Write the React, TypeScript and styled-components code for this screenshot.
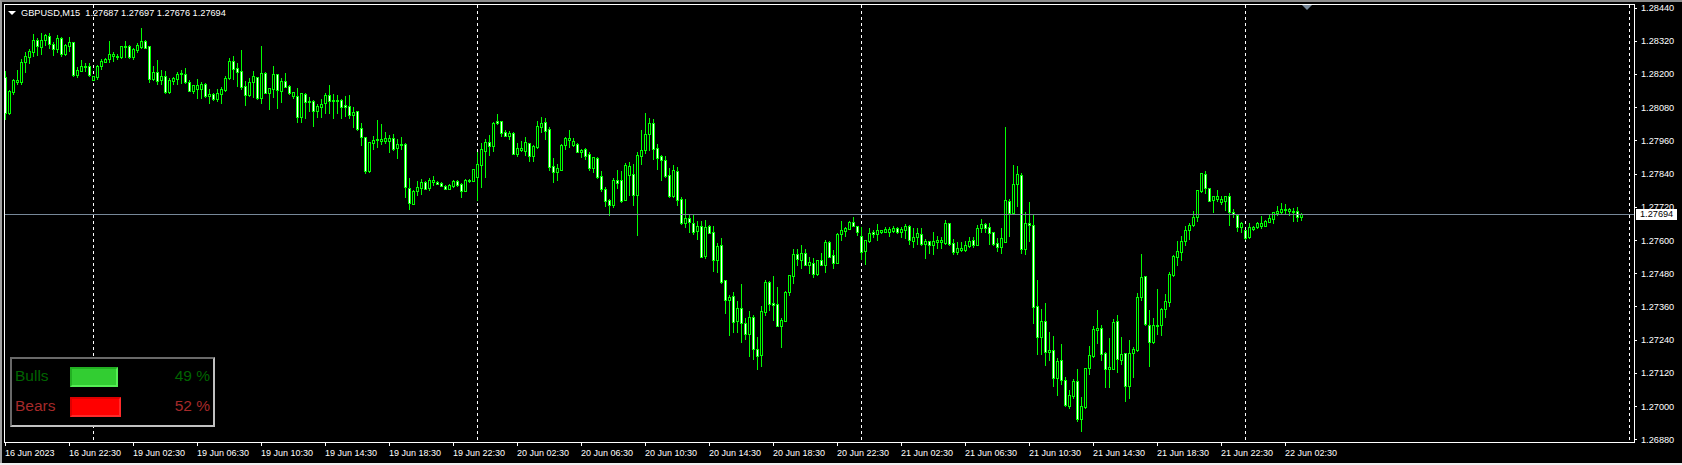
import React from "react";
import styled, { createGlobalStyle } from "styled-components";

type Bar = [number, number, number, number, number?];

// readings are [high, top, bottom, low, white body]; y in 1/3 px from a section base
const section1: Bar[] = [
  [153,170,280,296,1],[210,214,280,282],[178,181,215,223],[150,181,186,192],[118,127,186,191],[97,109,125,155],[87,94,110,130],[42,61,95,108],
  [55,61,78,105,1],[40,59,80,102],[42,46,60,75],[40,49,72,84,1],[67,71,87,105,1],[45,55,87,95],[52,55,102,107,1],[72,76,102,105],
  [52,67,78,92],[65,67,165,167,1],[142,151,165,170],[120,139,153,153],[128,139,141,153],[130,139,164,168,1],[168,169,179,179],[135,137,171,178],
  [116,124,137,147],[115,118,125,125],[64,103,117,125],[95,103,109,122],[103,109,112,118],[78,79,111,114],[64,78,80,110],[74,79,112,114,1],
  [84,87,111,117],[70,76,90,96],[24,64,81,84],[60,64,83,85,1],[78,79,177,186,1],[138,157,177,180],[120,157,182,192,1],[150,169,180,192],
  [152,169,215,218,1],[173,180,215,219],[170,175,183,192],[155,161,178,193],[150,160,163,190],[144,163,186,189,1],[180,187,212,214,1],[195,196,213,218],
  [178,196,208,234],[185,193,208,234],[190,192,227,232,1],[208,221,228,248],[220,223,238,240,1],[208,219,237,243],[200,208,221,248],[168,175,209,212],
  [115,124,174,178],[108,124,146,177,1],[130,145,155,198,1],[90,154,200,207,1],[183,199,224,254,1],[175,187,225,228],[153,169,185,232],[170,172,234,237,1],
  [78,160,233,248],[155,160,218,220,1],[205,205,220,267],[138,163,206,232],[162,163,211,263,1],[175,184,212,245],[160,184,200,202,1],[195,199,218,222,1],
  [215,217,227,235],[205,229,290,305,1],[219,220,290,305],[220,223,245,295,1],[230,243,245,273],[240,244,272,317,1],[252,259,272,290],[238,253,260,290],
  [220,226,250,280],[195,226,242,278,1],[222,240,242,293],[225,240,242,278],[238,241,260,295,1],[228,256,260,288,1],[225,259,284,295,1],[262,275,284,320],
  [272,274,326,330,1],[310,325,352,374,1],[350,352,453,458,1],[365,367,453,456],[348,359,368,388],[300,358,361,380],[312,358,362,372],[337,355,363,370],
  [345,355,362,395],[342,355,386,390,1],[358,373,385,415],[352,372,374,388],[370,373,502,530,1],[475,503,550,568,1],[510,514,552,553],[483,502,512,525],
];

const section2: Bar[] = [
  [238,247,263,282],[244,247,266,267,1],[235,241,263,270],[228,241,245,255],[244,246,251,252,1],[247,250,258,259,1],[254,257,266,267,1],[252,254,266,267],
  [240,244,258,260],[240,244,254,258,1],[250,253,272,291,1],[238,241,272,273],[238,240,244,245,1],[207,208,242,243],[155,193,230,300],[130,146,194,262],
  [118,127,152,230],[106,127,137,165,1],[65,70,137,152],[42,64,69,72,1],[63,64,98,108,1],[90,97,107,108,1],[92,100,107,117],[96,100,161,162,1],
  [130,145,161,168],[123,145,149,152],[112,127,152,165],[129,130,167,183,1],[136,139,167,183],[64,79,140,145],[52,70,80,95],[55,67,93,117,1],
  [80,88,200,210,1],[175,199,215,245,1],[193,205,215,240],[133,136,209,210],[112,115,136,147],[90,115,121,140],[113,124,134,138],[130,133,155,157,1],
  [148,150,155,172],[145,148,167,178,1],[157,163,203,210,1],[170,172,203,215],[172,175,231,235,1],[212,229,266,272,1],[262,268,302,318,1],[296,301,315,345,1],
  [235,241,315,322],[210,241,248,264,1],[213,241,302,305,1],[190,196,299,300],[186,199,226,285],[192,223,285,315,1],[155,166,285,405],[90,151,167,192],
  [40,103,149,158],[55,70,103,150],[57,70,146,177,1],[132,145,173,207,1],[165,169,179,240,1],[168,179,227,230,1],[203,226,288,291,1],[195,211,288,290],
  [202,214,299,315,1],[292,298,369,372,1],[298,355,369,381],[345,355,366,396,1],[345,370,396,402,1],[362,379,393,417],[363,379,470,472,1],[360,382,468,474],
  [375,379,399,400,1],[378,397,479,513,1],[430,439,479,515],[415,436,546,549,1],[540,541,599,640,1],[585,592,599,705],[576,589,665,696,1],[603,625,663,695],
  [552,625,668,725,1],[655,670,701,718,1],[633,652,701,767],[645,652,748,777,1],[711,748,767,807,1],[618,634,764,798],[540,546,635,645],[543,546,611,630,1],
  [528,610,615,660,1],[560,613,677,678,1],[655,661,677,740],[574,576,662,663],[525,526,577,584],[447,463,527,548],[447,463,478,495,1],[435,458,479,505],
  [447,458,494,495,1],[470,485,494,520],[474,488,521,530,1],[480,481,521,524],[460,481,494,495,1],[420,427,494,515],[422,427,470,470,1],[450,466,488,503,1],
  [400,401,488,488],
];

const section3: Bar[] = [
  [333,361,371,390],[350,355,362,378],[332,337,356,356],[321,337,347,347,1],[349,349,365,375,1],[350,377,425,447,1],[390,391,422,462],[354,370,393,396],
  [360,367,371,382,1],[342,361,371,390],[360,361,365,369],[350,358,365,366],[350,358,365,378],[348,355,363,366],[350,355,366,370,1],[352,358,365,382],
  [342,349,359,385],[345,349,391,402,1],[355,380,392,411],[354,370,380,403],[354,371,402,404,1],[388,394,402,444],[392,394,404,430,1],[366,394,404,432],
  [378,390,396,414],[380,390,396,414],[331,340,398,401],[339,340,402,404,1],[388,400,425,432,1],[396,415,425,431],[395,415,419,424],[393,405,419,424],
  [380,394,408,410],[381,391,405,410,1],[346,355,404,405],[327,343,353,365],[339,343,353,365,1],[340,352,368,402,1],[365,367,402,405,1],[384,400,411,423,1],
  [354,385,410,429],[51,271,395,397],[267,274,308,378,1],[165,223,308,310],[168,193,223,288],[190,196,418,428,1],[306,340,416,432],[277,340,346,393,1],
  [314,346,592,640,1],[510,589,680,732,1],[597,634,680,733],[579,634,727,766,1],[666,720,725,750],[678,721,803,828,1],[744,754,803,855],[702,751,809,822,1],
  [800,811,885,888,1],[840,856,887,893],[807,814,857,864],[777,814,927,933,1],[860,888,927,963],[775,775,891,894],[708,736,773,792],[648,658,737,740],
  [600,655,660,700],[645,655,731,750,1],[726,730,776,830,1],[685,772,776,830],[628,637,776,778],[615,634,746,785,1],[682,733,749,762],[730,730,827,873,1],
  [690,730,827,864],[710,718,730,800],[549,562,719,722],[432,502,560,570],[499,499,643,645,1],[600,646,697,768,1],[625,646,697,698],[537,646,648,672],
  [595,596,646,675],[553,574,596,620],[487,493,575,588],[435,439,494,497],[393,424,440,465],[378,394,425,450],[348,361,394,405],[340,346,361,387],
  [304,322,346,347],[240,241,320,332],[190,190,242,245],[183,193,235,248,1],[234,235,272,274,1],[259,259,270,305],[240,259,268,272],[258,268,275,282],
  [259,259,274,300],[250,259,307,345,1],[297,307,313,322,1],[315,316,350,362,1],
];

const section4: Bar[] = [
  [157,160,172,187],[179,181,204,208,1],[160,172,200,203],[168,171,177,180],[155,159,171,174],[138,160,167,175],[150,153,167,168],[135,145,155,157],
  [125,127,147,160],[108,124,130,135],[100,118,126,133],[102,117,119,130],[113,117,123,135],[115,123,125,153],[112,124,140,152,1],[128,132,141,150],
];

const toPixels = (base: number, bars: Bar[]): Bar[] =>
  bars.map(([h, t, b, l, w]) => [
    Math.round(base + h / 3),
    Math.round(base + t / 3),
    Math.round(base + b / 3),
    Math.round(base + l / 3),
    w,
  ]);

const candles: Bar[] = [
  ...toPixels(20, section1),
  ...toPixels(100, section2),
  ...toPixels(110, section3),
  ...toPixels(170, section4),
];

const prices = [
  "1.28440", "1.28320", "1.28200", "1.28080", "1.27960", "1.27840", "1.27720",
  "1.27600", "1.27480", "1.27360", "1.27240", "1.27120", "1.27000", "1.26880",
];

const times = [
  "16 Jun 2023", "16 Jun 22:30", "19 Jun 02:30", "19 Jun 06:30", "19 Jun 10:30", "19 Jun 14:30", "19 Jun 18:30",
  "19 Jun 22:30", "20 Jun 02:30", "20 Jun 06:30", "20 Jun 10:30", "20 Jun 14:30", "20 Jun 18:30", "20 Jun 22:30",
  "21 Jun 02:30", "21 Jun 06:30", "21 Jun 10:30", "21 Jun 14:30", "21 Jun 18:30", "21 Jun 22:30", "22 Jun 02:30",
];

const separators = [93, 477, 861, 1245, 1629];

const Global = createGlobalStyle`
  html, body {
    margin: 0;
    background: #f0f0f0;
  }
`;

const Page = styled.div`
  width: 1682px;
  height: 465px;
  overflow: hidden;
  background: #f0f0f0;
  font-family: "Liberation Sans", Arial, sans-serif;
`;

const Terminal = styled.div`
  height: 463px;
  box-sizing: border-box;
  background: #000;
  border-top: 2px solid #8c8c8c;
  border-left: 2px solid #a0a0a0;
  padding: 2px 0 0 2px;
  display: flex;
  flex-direction: column;
`;

const ChartRow = styled.div`
  display: flex;
  height: 439px;
  flex-shrink: 0;
`;

const Plot = styled.div`
  position: relative;
  width: 1631px;
  height: 439px;
  box-sizing: border-box;
  border: 1px solid #fff;
  flex-shrink: 0;
`;

const ChartSvg = styled.svg`
  display: block;
  shape-rendering: crispEdges;
`;

const Title = styled.div`
  position: absolute;
  top: 2px;
  left: 3px;
  display: flex;
  align-items: center;
  height: 12px;
  color: #fff;
  font-size: 9.2px;
  white-space: pre;
`;

const TitleArrow = styled.span`
  width: 0;
  height: 0;
  margin-right: 5px;
  border-left: 4px solid transparent;
  border-right: 4px solid transparent;
  border-top: 4px solid #fff;
`;

const ShiftMark = styled.div`
  position: absolute;
  top: 0;
  left: 1297px;
  width: 0;
  height: 0;
  border-left: 5px solid transparent;
  border-right: 5px solid transparent;
  border-top: 5px solid #778899;
`;

const Panel = styled.div`
  position: absolute;
  left: 5px;
  top: 352px;
  width: 205px;
  height: 70px;
  box-sizing: border-box;
  padding: 8px 3px 8px 3px;
  background: #000;
  border: 2px solid;
  border-color: #696969 #c0c0c0 #c0c0c0 #696969;
  display: flex;
  flex-direction: column;
  gap: 10px;
  font-size: 15.5px;
`;

const PanelRow = styled.div<{ $color: string }>`
  display: flex;
  align-items: center;
  height: 20px;
  color: ${(p) => p.$color};
`;

const PanelLabel = styled.span`
  width: 55px;
  flex-shrink: 0;
  margin-bottom: 3px;
`;

const Meter = styled.div<{ $width: number; $fill: string; $dark: string; $light: string }>`
  width: ${(p) => p.$width}px;
  height: 20px;
  box-sizing: border-box;
  background: ${(p) => p.$fill};
  border: 2px solid;
  border-color: ${(p) => p.$dark} ${(p) => p.$light} ${(p) => p.$light} ${(p) => p.$dark};
`;

const Percent = styled.span`
  margin-left: auto;
  margin-bottom: 3px;
`;

const PriceAxis = styled.div`
  position: relative;
  margin-top: -2px;
  height: 444px;
  flex: 1;
  display: flex;
  flex-direction: column;
  justify-content: space-between;
`;

const PriceRow = styled.div`
  display: flex;
  align-items: center;
  height: 12px;
  color: #fff;
  font-size: 9.2px;
`;

const PriceTick = styled.span`
  width: 2px;
  height: 1px;
  margin-right: 4px;
  background: #fff;
`;

const CurrentPrice = styled.div`
  position: absolute;
  top: 207px;
  left: 1px;
  width: 41px;
  height: 11px;
  background: #fff;
  color: #000;
  font-size: 9.2px;
  line-height: 11px;
  padding-left: 4px;
  box-sizing: border-box;
`;

const TimeAxis = styled.div`
  display: flex;
  margin-left: 1px;
  flex-shrink: 0;
`;

const TimeCell = styled.div`
  width: 64px;
  flex-shrink: 0;
  color: #fff;
  font-size: 9px;
  white-space: nowrap;
  line-height: 12px;
`;

const TimeTick = styled.div`
  width: 1px;
  height: 3px;
  background: #fff;
  margin-bottom: 1px;
`;

function Chart() {
  return (
    <ChartSvg width={1629} height={437} viewBox="5 5 1629 437">
      {separators.map((x) => (
        <line key={x} x1={x + 0.5} x2={x + 0.5} y1={5} y2={442} stroke="#fff" strokeDasharray="3 3" />
      ))}
      {candles.map(([high, top, bottom, low, white], i) => {
        const x = 5 + i * 4;
        const inner = bottom - top - 1;
        return (
          <g key={i}>
            <rect x={x} y={high} width={1} height={low - high + 1} fill="#00ff00" />
            <rect x={x - 1} y={top} width={3} height={bottom - top + 1} fill="#00ff00" />
            {inner > 0 && <rect x={x} y={top + 1} width={1} height={inner} fill={white ? "#fff" : "#000"} />}
          </g>
        );
      })}
      <rect x={5} y={214} width={1629} height={1} fill="#778899" />
    </ChartSvg>
  );
}

export default function App() {
  return (
    <Page>
      <Global />
      <Terminal>
        <ChartRow>
          <Plot>
            <Chart />
            <Title>
              <TitleArrow />
              {"GBPUSD,M15  1.27687 1.27697 1.27676 1.27694"}
            </Title>
            <ShiftMark />
            <Panel>
              <PanelRow $color="#006400">
                <PanelLabel>Bulls</PanelLabel>
                <Meter $width={48} $fill="#32cd32" $dark="#22b022" $light="#55ee55" />
                <Percent>49 %</Percent>
              </PanelRow>
              <PanelRow $color="#a52a2a">
                <PanelLabel>Bears</PanelLabel>
                <Meter $width={51} $fill="#ff0000" $dark="#dd0000" $light="#ff2a2a" />
                <Percent>52 %</Percent>
              </PanelRow>
            </Panel>
          </Plot>
          <PriceAxis>
            {prices.map((p) => (
              <PriceRow key={p}>
                <PriceTick />
                {p}
              </PriceRow>
            ))}
            <CurrentPrice>1.27694</CurrentPrice>
          </PriceAxis>
        </ChartRow>
        <TimeAxis>
          {times.map((t) => (
            <TimeCell key={t}>
              <TimeTick />
              {t}
            </TimeCell>
          ))}
        </TimeAxis>
      </Terminal>
    </Page>
  );
}
